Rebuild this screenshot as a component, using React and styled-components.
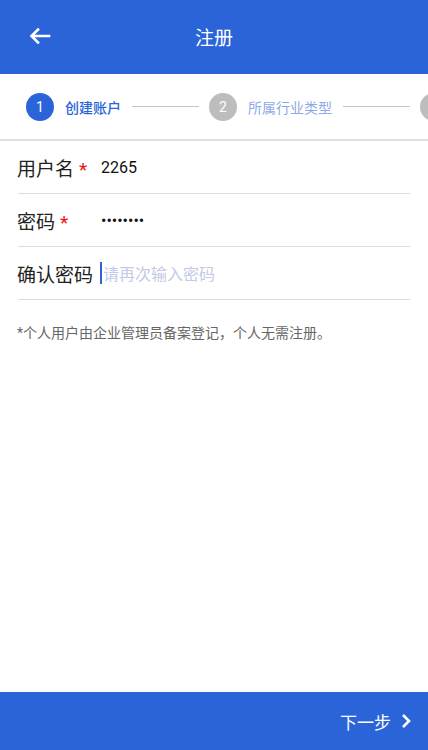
import React from 'react'
import styled, { createGlobalStyle } from 'styled-components'

const Global = createGlobalStyle`
  html, body { margin: 0; padding: 0; background: #fff; }
  body { font-family: Roboto, "Noto Sans CJK SC", sans-serif; }
  * { box-sizing: border-box; }
`

const Page = styled.div`
  width: 428px;
  height: 750px;
  display: flex;
  flex-direction: column;
  overflow: hidden;
`

const Header = styled.div`
  height: 74px;
  background: #2a64d8;
  display: flex;
  align-items: center;
  position: relative;
  flex-shrink: 0;
`

const Back = styled.div`
  width: 80px;
  padding-left: 29px;
  display: flex;
  align-items: center;
  margin-top: -2px;
`

const Title = styled.div`
  position: absolute;
  left: 0;
  right: 0;
  text-align: center;
  color: #fff;
  font-size: 19px;
  margin-top: -2px;
  pointer-events: none;
`

const Steps = styled.div`
  height: 67px;
  display: flex;
  align-items: center;
  padding-left: 26px;
  border-bottom: 2px solid #e0e0e0;
  white-space: nowrap;
  overflow: hidden;
  flex-shrink: 0;
`

const Circle = styled.div`
  width: 28px;
  height: 28px;
  border-radius: 50%;
  flex-shrink: 0;
  background: ${p => (p.active ? '#2a64d8' : '#bdbdbd')};
  color: #fff;
  font-size: 14px;
  display: flex;
  align-items: center;
  justify-content: center;
`

const StepLabel = styled.div`
  margin-left: 11px;
  font-size: 14px;
  color: ${p => (p.active ? '#2a64d8' : '#8fa8e8')};
  font-weight: ${p => (p.active ? 500 : 400)};
  flex-shrink: 0;
`

const Line = styled.div`
  width: 67px;
  height: 1px;
  background: #c4c4c4;
  margin: 0 10px 0 11px;
  flex-shrink: 0;
`

const Form = styled.div`
  padding: 0 18px;
`

const Row = styled.div`
  height: 53px;
  display: flex;
  align-items: center;
  border-bottom: 1px solid #dcdcdc;
`

const Label = styled.div`
  width: ${p => (p.auto ? 'auto' : '84px')};
  margin-right: ${p => (p.auto ? '8px' : '0')};
  margin-left: -1px;
  font-size: 19px;
  color: #222;
  flex-shrink: 0;
`

const Star = styled.span`
  color: #f01010;
  margin-left: 5px;
`

const Value = styled.div`
  font-size: 16px;
  color: #111;
  display: flex;
  align-items: center;
`

const Caret = styled.span`
  display: inline-block;
  width: 2px;
  height: 22px;
  background: #2a64d8;
  margin-left: -1px;
  margin-right: 1px;
`

const Placeholder = styled.span`
  color: #c3c9e6;
  font-size: 16px;
`

const Note = styled.div`
  padding: 22px 17px;
  font-size: 14px;
  color: #666;
`

const Spacer = styled.div`
  flex: 1;
`

const Footer = styled.div`
  height: 58px;
  background: #2a64d8;
  display: flex;
  align-items: center;
  justify-content: flex-end;
  padding-right: 16px;
  color: #fff;
  font-size: 17px;
  gap: 9px;
  flex-shrink: 0;
`

export default function App() {
  return (
    <Page>
      <Global />
      <Header>
        <Back>
          <svg width="22" height="18" viewBox="0 0 22 18" fill="none" stroke="#fff" strokeWidth="2.6" strokeLinecap="square">
            <path d="M3 9h17M9 2.5L2.5 9 9 15.5" />
          </svg>
        </Back>
        <Title>注册</Title>
      </Header>
      <Steps>
        <Circle active>1</Circle>
        <StepLabel active>创建账户</StepLabel>
        <Line />
        <Circle>2</Circle>
        <StepLabel>所属行业类型</StepLabel>
        <Line />
        <Circle />
      </Steps>
      <Form>
        <Row>
          <Label>用户名<Star>*</Star></Label>
          <Value>2265</Value>
        </Row>
        <Row>
          <Label>密码<Star>*</Star></Label>
          <Value>••••••••</Value>
        </Row>
        <Row>
          <Label auto>确认密码</Label>
          <Value><Caret /><Placeholder>请再次输入密码</Placeholder></Value>
        </Row>
      </Form>
      <Note>*个人用户由企业管理员备案登记，个人无需注册。</Note>
      <Spacer />
      <Footer>
        下一步
        <svg width="12" height="16" viewBox="0 0 12 16" fill="none" stroke="#fff" strokeWidth="2.6">
          <path d="M3 2l6 6-6 6" />
        </svg>
      </Footer>
    </Page>
  )
}
